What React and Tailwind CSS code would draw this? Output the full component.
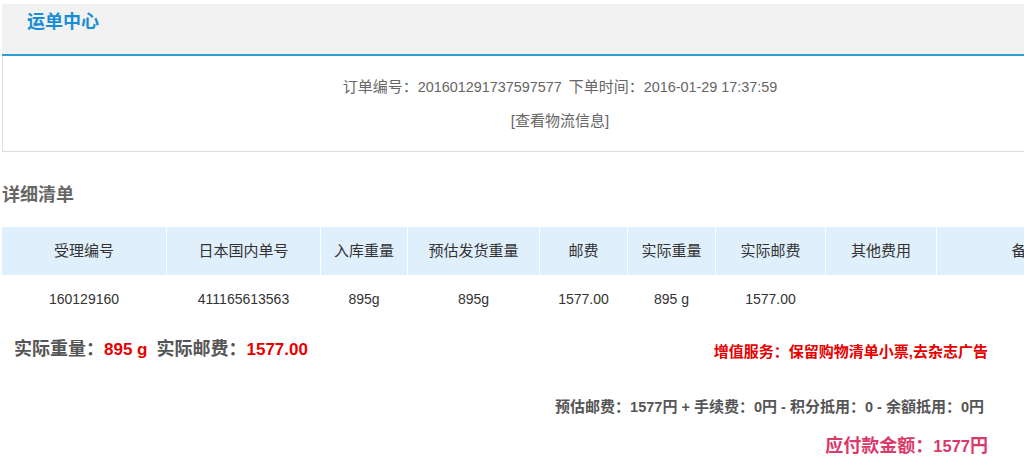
import React from "react";

const cols = ["w-[164px]", "w-[153px]", "w-[86px]", "w-[131px]", "w-[87px]", "w-[87px]", "w-[109px]", "w-[110px]", "w-[179px]"];
const heads = ["受理编号", "日本国内单号", "入库重量", "预估发货重量", "邮费", "实际重量", "实际邮费", "其他费用", "备注"];
const vals = ["160129160", "411165613563", "895g", "895g", "1577.00", "895 g", "1577.00", "", ""];

// Splits a string into CJK and Latin runs; Latin runs get the given class.
function Mixed({ text, latin }) {
  const parts = text.split(/([\u3000-\u9fff\uff00-\uffef]+)/);
  return (
    <>
      {parts.map((p, i) =>
        p === "" ? null : /[\u3000-\u9fff\uff00-\uffef]/.test(p) ? (
          <span key={i}>{p}</span>
        ) : (
          <span key={i} className={latin}>
            {p}
          </span>
        )
      )}
    </>
  );
}

export default function App() {
  return (
    <div
      className="w-[1024px] h-[470px] overflow-hidden bg-white"
      style={{ fontFamily: '"Liberation Sans", Arial, "Noto Sans CJK SC", sans-serif' }}
    >
      <div className="w-[1116px] ml-[2px] pt-[4px]">
        {/* Header */}
        <div className="h-[52px] bg-[#f2f2f2] border-b-2 border-[#2e9ed3] pl-[25px] pt-[8px]">
          <div className="text-[18px] leading-[20px] font-bold text-[#1a8ed5]">运单中心</div>
        </div>
        {/* Order info box */}
        <div className="border border-t-0 border-[#dddddd] pt-[21px] pb-[20px] flex flex-col items-center text-[15px] leading-[20px] text-[#666666]">
          <div className="whitespace-nowrap">
            <Mixed text="订单编号：201601291737597577" latin="text-[14.4px]" />
            <span className="inline-block w-[7px]"></span>
            <Mixed text="下单时间：2016-01-29 17:37:59" latin="text-[14.4px]" />
          </div>
          <div className="mt-[14px]">[查看物流信息]</div>
        </div>

        {/* Detail title */}
        <div className="mt-[31px] text-[18px] leading-[24px] font-bold text-[#666666]">详细清单</div>

        {/* Table */}
        <div className="mt-[20px]">
          <div className="flex gap-px">
            {heads.map((h, i) => (
              <div
                key={i}
                className={`${cols[i]} h-[48px] shrink-0 bg-[#e0effc] flex items-center justify-center text-[15px] text-[#333333]`}
              >
                {h}
              </div>
            ))}
          </div>
          <div className="flex gap-px">
            {vals.map((v, i) => (
              <div
                key={i}
                className={`${cols[i]} h-[48px] shrink-0 flex items-center justify-center text-[14px] text-[#333333]`}
              >
                {v}
              </div>
            ))}
          </div>
        </div>

        {/* Summary */}
        <div className="flex justify-between items-start pr-[130px]">
          <div className="pl-[12px] text-[18px] leading-[24px] font-bold text-[#555555] mt-[14px] whitespace-nowrap">
            实际重量：<span className="text-[#e60000] text-[17px]">895 g</span>
            <span className="inline-block w-[9px]"></span>实际邮费：<span className="text-[#e60000] text-[17px]">1577.00</span>
          </div>
          <div className="text-[15px] leading-[20px] font-bold text-[#e60000] mt-[19px] whitespace-nowrap">
            增值服务：保留购物清单小票,去杂志广告
          </div>
        </div>

        <div className="flex flex-col items-end pr-[130px]">
          <div className="mt-[35px] text-[15px] leading-[20px] font-bold text-[#555555] pr-[4px] whitespace-nowrap">
            <Mixed text="预估邮费：1577円 + 手续费：0円 - 积分抵用：0 - 余額抵用：0円" latin="text-[14.5px]" />
          </div>
          <div className="mt-[17px] text-[18px] leading-[24px] font-bold text-[#d93a6a] whitespace-nowrap">
            <Mixed text="应付款金额：1577円" latin="text-[16.5px]" />
          </div>
        </div>
      </div>
    </div>
  );
}
